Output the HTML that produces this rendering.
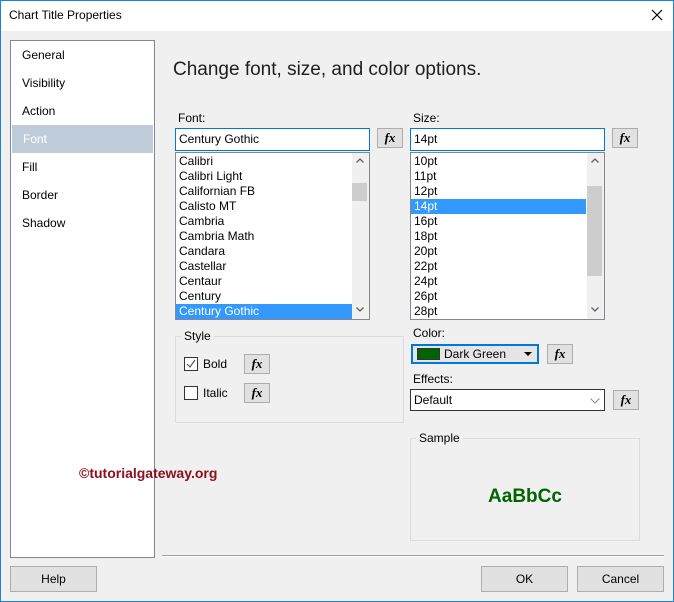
<!DOCTYPE html>
<html><head><style>
*{box-sizing:border-box;margin:0;padding:0}
body{width:674px;height:602px;background:#f0f0f0;font-family:"Liberation Sans",sans-serif;font-size:12px;color:#000;position:relative;overflow:hidden}
.a{position:absolute}
.win{left:0;top:0;width:674px;height:602px;border:1px solid #1883d7}
.fx{position:absolute;border:1px solid #adadad;background:#e1e1e1;font-family:"Liberation Serif",serif;font-weight:bold;font-style:italic;font-size:13px;text-align:center;line-height:17px}
.btn{position:absolute;border:1px solid #adadad;background:#e1e1e1;text-align:center;line-height:24px;font-size:12px}
.list{position:absolute;background:#fff;border:1px solid #828790;overflow:hidden;padding-top:1px}
.list div{height:15px;line-height:15px;padding-left:3px;font-size:12px}
.sel{background:#3399ff;color:#fff}
.nav div{height:28px;line-height:28px;padding-left:11px}
.arr{position:absolute;width:8px;height:5px}
</style></head><body>
<div class="a" style="left:0;top:0;width:674px;height:31px;background:#fff"></div>
<div class="a" style="left:9px;top:8px;font-size:12px">Chart Title Properties</div>
<svg class="a" style="left:651px;top:9px" width="12" height="12"><path d="M1 1L11 11M11 1L1 11" stroke="#000" stroke-width="1.2"/></svg>
<div class="a win"></div>

<div class="a nav" style="left:10px;top:40px;width:145px;height:518px;background:#fff;border:1px solid #828790">
<div>General</div><div>Visibility</div><div>Action</div>
<div style="background:#bfcddb;color:#fff;margin:0 1px">Font</div><div>Fill</div><div>Border</div><div>Shadow</div>
</div>

<div class="a" style="left:173px;top:59px;font-size:19px;color:#1e1e1e">Change font, size, and color options.</div>

<div class="a" style="left:178px;top:111px">Font:</div>
<div class="a" style="left:175px;top:128px;width:195px;height:23px;background:#fff;border:1px solid #0078d7;padding:3px 3px">Century Gothic</div>
<div class="fx" style="left:377px;top:128px;width:26px;height:20px">fx</div>
<div class="list" style="left:175px;top:152px;width:195px;height:168px">
<div>Calibri</div><div>Calibri Light</div><div>Californian FB</div><div>Calisto MT</div><div>Cambria</div><div>Cambria Math</div><div>Candara</div><div>Castellar</div><div>Centaur</div><div>Century</div><div class="sel" style="margin-right:17px">Century Gothic</div>
</div>
<div class="a" style="left:352px;top:153px;width:17px;height:166px;background:#f0f0f0"></div>
<div class="a" style="left:352px;top:183px;width:15px;height:18px;background:#cdcdcd"></div>
<svg class="arr" style="left:356px;top:158px"><path d="M0.5 4.5L4 1L7.5 4.5" stroke="#606060" fill="none" stroke-width="1.3"/></svg>
<svg class="arr" style="left:356px;top:307px"><path d="M0.5 0.5L4 4L7.5 0.5" stroke="#606060" fill="none" stroke-width="1.3"/></svg>

<div class="a" style="left:413px;top:111px">Size:</div>
<div class="a" style="left:410px;top:128px;width:195px;height:23px;background:#fff;border:1px solid #0078d7;padding:3px 3px">14pt</div>
<div class="fx" style="left:612px;top:128px;width:26px;height:20px">fx</div>
<div class="list" style="left:410px;top:152px;width:195px;height:168px">
<div>10pt</div><div>11pt</div><div>12pt</div><div class="sel" style="margin-right:18px">14pt</div><div>16pt</div><div>18pt</div><div>20pt</div><div>22pt</div><div>24pt</div><div>26pt</div><div>28pt</div>
</div>
<div class="a" style="left:587px;top:153px;width:17px;height:166px;background:#f0f0f0"></div>
<div class="a" style="left:587px;top:186px;width:15px;height:90px;background:#cdcdcd"></div>
<svg class="arr" style="left:591px;top:158px"><path d="M0.5 4.5L4 1L7.5 4.5" stroke="#606060" fill="none" stroke-width="1.3"/></svg>
<svg class="arr" style="left:591px;top:307px"><path d="M0.5 0.5L4 4L7.5 0.5" stroke="#606060" fill="none" stroke-width="1.3"/></svg>

<div class="a" style="left:175px;top:336px;width:229px;height:87px;border:1px solid #dcdcdc"></div>
<div class="a" style="left:181px;top:329px;background:#f0f0f0;padding:0 3px">Style</div>
<div class="a" style="left:184px;top:357px;width:14px;height:14px;border:1px solid #333;background:#fff"></div>
<svg class="a" style="left:185px;top:358px" width="12" height="12"><path d="M2 6L5 9L10 2" stroke="#555" fill="none" stroke-width="1.2"/></svg>
<div class="a" style="left:203px;top:357px">Bold</div>
<div class="fx" style="left:244px;top:354px;width:26px;height:20px">fx</div>
<div class="a" style="left:184px;top:386px;width:14px;height:14px;border:1px solid #333;background:#fff"></div>
<div class="a" style="left:203px;top:386px">Italic</div>
<div class="fx" style="left:244px;top:383px;width:26px;height:20px">fx</div>

<div class="a" style="left:413px;top:326px">Color:</div>
<div class="a" style="left:411px;top:344px;width:128px;height:20px;border:2px solid #0078d7;background:#e5e5e5"></div>
<div class="a" style="left:417px;top:348px;width:23px;height:12px;background:#006400;border:1px solid #333"></div>
<div class="a" style="left:444px;top:347px">Dark Green</div>
<svg class="a" style="left:524px;top:352px" width="8" height="5"><path d="M0 0H8L4 4Z" fill="#000"/></svg>
<div class="fx" style="left:547px;top:344px;width:26px;height:20px">fx</div>
<div class="a" style="left:413px;top:372px">Effects:</div>
<div class="a" style="left:410px;top:389px;width:195px;height:22px;background:#fff;border:1px solid #333;padding:3px 3px">Default</div>
<svg class="a" style="left:590px;top:398px" width="10" height="6"><path d="M0.5 0.5L5 5L9.5 0.5" stroke="#888" fill="none"/></svg>
<div class="fx" style="left:613px;top:390px;width:26px;height:20px">fx</div>

<div class="a" style="left:410px;top:438px;width:230px;height:103px;border:1px solid #dcdcdc"></div>
<div class="a" style="left:416px;top:431px;background:#f0f0f0;padding:0 3px">Sample</div>
<div class="a" style="left:410px;top:486px;width:230px;text-align:center;font-size:19px;font-weight:bold;color:#006400">AaBbCc</div>

<div class="a" style="left:79px;top:465px;font-size:14px;font-weight:bold;color:#8b1020">©tutorialgateway.org</div>

<div class="a" style="left:162px;top:555px;width:502px;height:1px;background:#a0a0a0"></div>
<div class="a" style="left:162px;top:556px;width:502px;height:1px;background:#fff"></div>
<div class="btn" style="left:10px;top:566px;width:87px;height:26px">Help</div>
<div class="btn" style="left:481px;top:566px;width:87px;height:26px">OK</div>
<div class="btn" style="left:577px;top:566px;width:87px;height:26px">Cancel</div>
</body></html>
